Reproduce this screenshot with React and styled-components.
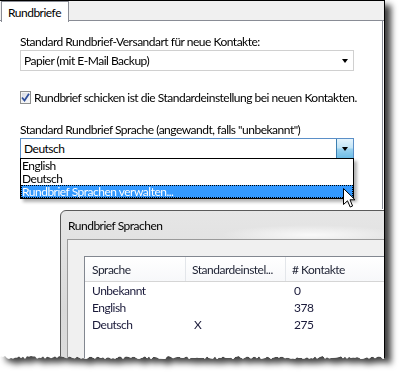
import React from 'react'
import styled, { createGlobalStyle } from 'styled-components'

const GlobalStyle = createGlobalStyle`
  html, body {
    margin: 0;
    padding: 0;
    background: #fff;
  }
  body {
    font-family: Lato, "Noto Sans", sans-serif;
    font-size: 12px;
    letter-spacing: -0.5px;
    color: #000;
  }
`

// jagged bottom edge of the screenshot, same every render
const tornEdge = (() => {
  let seed = 11
  const rnd = () => {
    seed = (seed * 9301 + 49297) % 233280
    return seed / 233280
  }
  const pts = []
  for (let x = 385; x >= 0; x -= 2) {
    pts.push(`${x}px ${(356 + rnd() * 3).toFixed(1)}px`)
  }
  return `polygon(0 0, 385px 0, ${pts.join(', ')}, 0 357px)`
})()

function App() {
  return (
    <>
      <GlobalStyle />
      <Stage>
        <Shadow>
          <Shot>
            <TabStrip>
              <Tab>Rundbriefe</Tab>
            </TabStrip>
            <TabPage>
              <Label>Standard Rundbrief-Versandart für neue Kontakte:</Label>
              <Combo>
                <ComboText>Papier (mit E-Mail Backup)</ComboText>
                <Arrow />
              </Combo>
              <CheckRow>
                <CheckBox>
                  <svg width="9" height="9" viewBox="0 0 9 9">
                    <path d="M1 4.5 L3.5 7.5 L8 0.8" fill="none" stroke="#2f4f9a" strokeWidth="1.8" />
                  </svg>
                </CheckBox>
                Rundbrief schicken ist die Standardeinstellung bei neuen Kontakten.
              </CheckRow>
              <Label $top={17}>Standard Rundbrief Sprache (angewandt, falls "unbekannt")</Label>
              <ComboWrap>
                <Combo $focused>
                  <ComboText>Deutsch</ComboText>
                  <DropButton>
                    <Arrow />
                  </DropButton>
                </Combo>
                <DropList>
                  <Item>English</Item>
                  <Item>Deutsch</Item>
                  <Item $selected>Rundbrief Sprachen verwalten...</Item>
                </DropList>
                <Cursor width="13" height="20" viewBox="0 0 13 20">
                  <path d="M0.5 0.5 L0.5 16.5 L4.5 12.8 L7.2 19 L9.6 18 L7 11.8 L12 11.8 Z" fill="#fff" stroke="#000" strokeWidth="1" />
                </Cursor>
              </ComboWrap>
            </TabPage>

            <Dialog>
              <TitleBar>Rundbrief Sprachen</TitleBar>
              <ClientArea>
                <ListView>
                  <HeaderRow>
                    <HeadCell>Sprache</HeadCell>
                    <HeadCell>Standardeinstel...</HeadCell>
                    <HeadCell $last># Kontakte</HeadCell>
                  </HeaderRow>
                  {rows.map(r => (
                    <Row key={r.name}>
                      <Cell>{r.name}</Cell>
                      <Cell>{r.def}</Cell>
                      <Cell>{r.count}</Cell>
                    </Row>
                  ))}
                </ListView>
              </ClientArea>
            </Dialog>
          </Shot>
        </Shadow>
      </Stage>
    </>
  )
}

const rows = [
  { name: 'Unbekannt', def: '', count: '0' },
  { name: 'English', def: '', count: '378' },
  { name: 'Deutsch', def: 'X', count: '275' },
]

export default App

const Stage = styled.div`
  width: 400px;
  height: 377px;
  overflow: hidden;
  background: #fff;
`

const Shadow = styled.div`
  width: 385px;
  height: 366px;
  filter: drop-shadow(6px 5px 3px rgba(0, 0, 0, 0.75));
`

const Shot = styled.div`
  position: relative;
  box-sizing: border-box;
  width: 385px;
  height: 366px;
  background: #fff;
  border-top: 1px solid #000;
  border-right: 1px solid #000;
  overflow: hidden;
  clip-path: ${tornEdge};
`

const TabStrip = styled.div`
  display: flex;
  height: 19px;
  background: #f0f0f0;
  border-bottom: 1px solid #898c95;
`

const Tab = styled.div`
  box-sizing: border-box;
  height: 21px;
  width: 68px;
  margin-left: 1px;
  padding: 3px 0 0 6px;
  background: #fff;
  border: 1px solid #898c95;
  border-bottom: none;
  line-height: 15px;
  white-space: nowrap;
  position: relative;
  z-index: 1;
`

const TabPage = styled.div`
  box-sizing: border-box;
  height: 188px;
  margin-right: 1px;
  padding: 13px 28px 0 20px;
  border-right: 1px solid #898c95;
  display: flex;
  flex-direction: column;
`

const Label = styled.div`
  margin-top: ${p => p.$top || 0}px;
  line-height: 15px;
  white-space: nowrap;
`

const Combo = styled.div`
  box-sizing: border-box;
  height: 21px;
  margin-top: 1px;
  display: flex;
  align-items: center;
  justify-content: space-between;
  border: 1px solid ${p => (p.$focused ? '#5b8fc7' : '#d0d0d0')};
  background: #fff;
  padding-left: 3px;
  padding-right: ${p => (p.$focused ? '0' : '5px')};
`

const ComboText = styled.span`
  line-height: 15px;
`

const Arrow = styled.span`
  width: 0;
  height: 0;
  border-left: 3.5px solid transparent;
  border-right: 3.5px solid transparent;
  border-top: 4px solid #000;
`

const DropButton = styled.div`
  box-sizing: border-box;
  width: 17px;
  height: 19px;
  display: flex;
  align-items: center;
  justify-content: center;
  border-left: 1px solid #3c7fb1;
  background: linear-gradient(to bottom, #e5f4fc 0%, #c4e5f6 45%, #98d1ef 55%, #6dbce6 100%);
`

const CheckRow = styled.div`
  margin-top: 19px;
  display: flex;
  align-items: center;
  gap: 3px;
  line-height: 15px;
  white-space: nowrap;
`

const CheckBox = styled.span`
  box-sizing: border-box;
  width: 13px;
  height: 13px;
  display: flex;
  align-items: center;
  justify-content: center;
  border: 1px solid #8e8f8f;
  background: linear-gradient(135deg, #d0d4dc 0%, #eef0f4 60%, #fafafa 100%);
  box-shadow: inset 0 0 0 1px #f4f4f4;
`

const ComboWrap = styled.div`
  position: relative;
`

const DropList = styled.div`
  position: absolute;
  left: 0;
  right: 0;
  top: 21px;
  z-index: 2;
  border: 1px solid #000;
  background: #fff;
  box-shadow: 3px 3px 3px rgba(0, 0, 0, 0.3);
`

const Item = styled.div`
  box-sizing: border-box;
  height: 13px;
  padding-left: 1px;
  line-height: 13px;
  white-space: nowrap;
  color: ${p => (p.$selected ? '#fff' : '#000')};
  background: ${p => (p.$selected ? '#3399ff' : 'transparent')};
  outline: ${p => (p.$selected ? '1px dotted #000' : 'none')};
  outline-offset: -1px;
`

const Cursor = styled.svg`
  position: absolute;
  left: 323px;
  top: 51px;
  z-index: 3;
`

const Dialog = styled.div`
  position: absolute;
  left: 60px;
  top: 209px;
  width: 360px;
  height: 200px;
  border: 1px solid #5a5a5a;
  border-top-left-radius: 6px;
  background:
    radial-gradient(ellipse 90px 10px at 250px 24px, rgba(255, 255, 255, 0.8), transparent),
    linear-gradient(to bottom, #e6e6e6 0%, #d9d9d9 50%, #dedede 100%);
  padding-left: 6px;
`

const TitleBar = styled.div`
  height: 28px;
  padding-left: 1px;
  display: flex;
  align-items: center;
`

const ClientArea = styled.div`
  height: 100%;
  border-top: 1px solid #9a9a9a;
  border-left: 1px solid #9a9a9a;
  background: #f0f0f0;
  padding: 16px 0 0 16px;
`

const ListView = styled.div`
  height: 100%;
  border: 1px solid #828790;
  background: #fff;
`

const HeaderRow = styled.div`
  display: grid;
  grid-template-columns: 101px 100px 1fr;
  height: 24px;
  border-bottom: 1px solid #d5d5d5;
  background: linear-gradient(to bottom, #ffffff, #f7f8fa);
`

const HeadCell = styled.div`
  display: flex;
  align-items: center;
  padding-left: 6px;
  color: #1e2233;
  border-right: ${p => (p.$last ? 'none' : '1px solid #e3e6ea')};
  white-space: nowrap;
  &:first-child {
    padding-left: 7px;
  }
`

const Row = styled.div`
  display: grid;
  grid-template-columns: 101px 100px 1fr;
  height: 17px;
`

const Cell = styled.div`
  display: flex;
  align-items: center;
  padding-left: 8px;
  color: #1a1a3a;
  &:first-child {
    padding-left: 7px;
  }
`
